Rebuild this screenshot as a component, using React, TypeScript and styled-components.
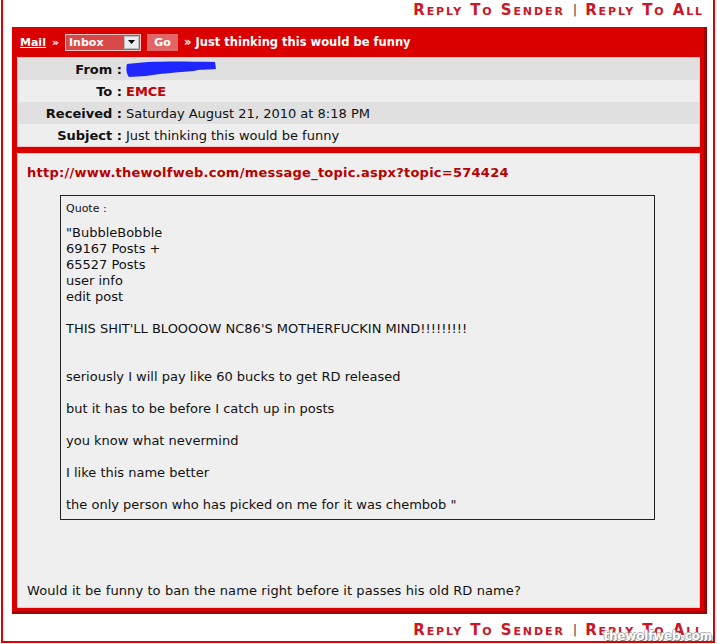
import React from 'react';
import styled, { createGlobalStyle } from 'styled-components';

const GlobalStyle = createGlobalStyle`
  html, body {
    margin: 0;
    padding: 0;
    background: #ffffff;
  }
  body {
    font-family: "DejaVu Sans", Verdana, sans-serif;
    color: #111111;
  }
`;

const Frame = styled.div`
  position: relative;
  box-sizing: border-box;
  width: 714px;
  height: 643px;
  margin-left: 1px;
  border-left: 2px solid #e00000;
  border-right: 2px solid #e00000;
  border-bottom: 2px solid #e00000;
  padding: 0 0 0 9px;
`;

const ReplyBar = styled.div<{ $height: number; $top: number }>`
  box-sizing: border-box;
  height: ${(p) => p.$height}px;
  width: 692px;
  padding-top: ${(p) => p.$top}px;
  display: flex;
  justify-content: flex-end;
  align-items: flex-start;
  gap: 8px;
  font-family: "DejaVu Sans", sans-serif;
  font-weight: bold;
  font-size: 15px;
  line-height: 16px;
  font-variant: small-caps;
  letter-spacing: 1.9px;
  color: #cc1526;
`;

const ReplyLink = styled.a`
  color: inherit;
  text-decoration: none;
`;

const Divider = styled.span`
  color: #444;
  font-weight: normal;
  font-size: 13px;
  letter-spacing: 0;
`;

const Panel = styled.div`
  box-sizing: border-box;
  width: 695px;
  background: #da0000;
  padding: 0 4px 3px 5px;
  border-right: 3px solid #9e0000;
  border-bottom: 3px solid #9e0000;
`;

const Crumbs = styled.div`
  height: 30px;
  display: flex;
  align-items: center;
  gap: 6px;
  padding-left: 3px;
  color: #ffffff;
  font-family: "DejaVu Sans", sans-serif;
  font-weight: bold;
  font-size: 11px;
`;

const CrumbLink = styled.a`
  color: #ffffff;
  text-decoration: underline;
`;

const Select = styled.div`
  box-sizing: border-box;
  width: 76px;
  height: 17px;
  display: flex;
  align-items: center;
  justify-content: space-between;
  padding: 0 1px 0 3px;
  background: #d94848;
  border: 1px solid #f2c0c0;
  font-size: 11px;
`;

const SelectArrow = styled.span`
  width: 15px;
  height: 13px;
  display: flex;
  align-items: center;
  justify-content: center;
  background: #ececec;
  border: 1px solid #bdbdbd;
  box-sizing: border-box;
`;

const GoButton = styled.span`
  box-sizing: border-box;
  width: 31px;
  height: 17px;
  display: flex;
  align-items: center;
  justify-content: center;
  background: #e16666;
  font-size: 11px;
`;

const Title = styled.span`
  font-size: 11.5px;
`;

const InfoTable = styled.div`
  border: 1px solid #f5c4c4;
`;

const InfoRow = styled.div<{ $shade: boolean }>`
  height: 22px;
  display: grid;
  grid-template-columns: 104px 1fr;
  column-gap: 4px;
  align-items: center;
  background: ${(p) => (p.$shade ? '#e0e0e0' : '#eeeeee')};
  font-size: 13px;
`;

const Label = styled.span`
  text-align: right;
  font-weight: bold;
`;

const Value = styled.span<{ $red?: boolean }>`
  color: ${(p) => (p.$red ? '#c40000' : '#111111')};
  font-weight: ${(p) => (p.$red ? 'bold' : 'normal')};
  display: flex;
  align-items: center;
`;

const Body = styled.div`
  box-sizing: border-box;
  margin-top: 6px;
  height: 455px;
  background: #efefef;
  border: 1px solid #f5c4c4;
  padding: 11px 10px 0 9px;
  font-size: 13px;
  line-height: 16px;
`;

const TopicLink = styled.a`
  display: block;
  color: #b80000;
  font-weight: bold;
  letter-spacing: 0.25px;
  text-decoration: none;
`;

const Quote = styled.div`
  box-sizing: border-box;
  width: 595px;
  margin: 14px 0 0 33px;
  border: 1px solid #222222;
  padding: 6px 5px 6px 5px;
`;

const QuoteLabel = styled.div`
  font-size: 11px;
  line-height: 14px;
  margin-bottom: 9px;
`;

const QuoteLine = styled.div`
  height: 16px;
  white-space: pre;
`;

const Closing = styled.div`
  margin-top: 63px;
  letter-spacing: 0.1px;
`;

const Watermark = styled.span`
  position: absolute;
  right: 1px;
  bottom: -2px;
  font-family: "DejaVu Sans", sans-serif;
  font-weight: bold;
  font-size: 12px;
  line-height: 14px;
  color: #ffffff;
  text-shadow: 1px 1px 0 #8a8a8a, -1px 0 0 #b0b0b0, 0 -1px 0 #b0b0b0;
  letter-spacing: -0.2px;
`;

const quoteLines = [
  '"BubbleBobble',
  '69167 Posts +',
  '65527 Posts',
  'user info',
  'edit post',
  '',
  "THIS SHIT'LL BLOOOOW NC86'S MOTHERFUCKIN MIND!!!!!!!!!",
  '',
  '',
  'seriously I will pay like 60 bucks to get RD released',
  '',
  'but it has to be before I catch up in posts',
  '',
  'you know what nevermind',
  '',
  'I like this name better',
  '',
  'the only person who has picked on me for it was chembob "',
];

// blue marker scribble that hides the sender name
const Redaction = () => (
  <svg width="92" height="18" viewBox="0 0 92 18">
    <path
      d="M1 4 C20 1 50 1 89 2 L90 9 C82 10 72 9 68 11 C52 12 32 14 20 16 L3 17 C0 13 0 8 1 4 Z"
      fill="#1f26ff"
    />
  </svg>
);

const Replies = ({ height, top }: { height: number; top: number }) => (
  <ReplyBar $height={height} $top={top}>
    <ReplyLink href="#">Reply To Sender</ReplyLink>
    <Divider>|</Divider>
    <ReplyLink href="#">Reply To All</ReplyLink>
  </ReplyBar>
);

const App = () => (
  <>
    <GlobalStyle />
    <Frame>
      <Replies height={27} top={2} />
      <Panel>
        <Crumbs>
          <CrumbLink href="#">Mail</CrumbLink>
          <span>»</span>
          <Select>
            <span>Inbox</span>
            <SelectArrow>
              <svg width="7" height="4" viewBox="0 0 7 4">
                <path d="M0 0 H7 L3.5 4 Z" fill="#000" />
              </svg>
            </SelectArrow>
          </Select>
          <GoButton>Go</GoButton>
          <Title>» Just thinking this would be funny</Title>
        </Crumbs>
        <InfoTable>
          <InfoRow $shade>
            <Label>From :</Label>
            <Value>
              <Redaction />
            </Value>
          </InfoRow>
          <InfoRow $shade={false}>
            <Label>To :</Label>
            <Value $red>EMCE</Value>
          </InfoRow>
          <InfoRow $shade>
            <Label>Received :</Label>
            <Value>Saturday August 21, 2010 at 8:18 PM</Value>
          </InfoRow>
          <InfoRow $shade={false}>
            <Label>Subject :</Label>
            <Value>Just thinking this would be funny</Value>
          </InfoRow>
        </InfoTable>
        <Body>
          <TopicLink href="#">
            http://www.thewolfweb.com/message_topic.aspx?topic=574424
          </TopicLink>
          <Quote>
            <QuoteLabel>Quote :</QuoteLabel>
            {quoteLines.map((line, i) => (
              <QuoteLine key={i}>{line}</QuoteLine>
            ))}
          </Quote>
          <Closing>
            Would it be funny to ban the name right before it passes his old RD
            name?
          </Closing>
        </Body>
      </Panel>
      <Replies height={30} top={8} />
      <Watermark>thewolfweb.com</Watermark>
    </Frame>
  </>
);

export default App;
